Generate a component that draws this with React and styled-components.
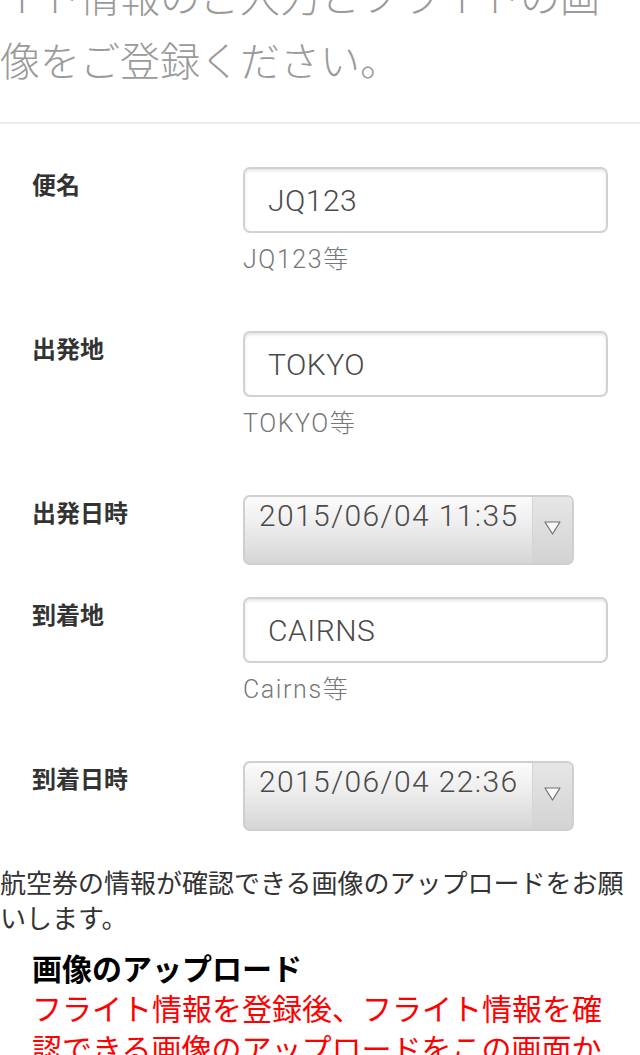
import React from "react";
import styled, { createGlobalStyle } from "styled-components";

const GlobalStyle = createGlobalStyle`
  html, body {
    margin: 0;
    padding: 0;
    background: #fff;
  }
  body {
    font-family: "Noto Sans CJK JP", "Noto Sans", sans-serif;
    overflow: hidden;
  }
`;

const Page = styled.div`
  width: 640px;
  margin-top: -101px;
  box-sizing: border-box;
`;

const Lead = styled.p`
  margin: 0;
  width: 600px;
  font-size: 40px;
  line-height: 64px;
  font-weight: 300;
  color: #9a9a9a;
`;

const Divider = styled.hr`
  margin: 31px 0 0 0;
  border: 0;
  height: 2px;
  background: #ebebeb;
`;

const Form = styled.div`
  padding: 43px 32px 0 0;
  display: flex;
  flex-direction: column;
`;

const Row = styled.div`
  display: grid;
  grid-template-columns: 243px 1fr;
  margin-bottom: ${(p) => (p.$select ? "32px" : "56px")};

  &:last-child {
    margin-bottom: 0;
  }
`;

const Label = styled.div`
  padding-left: 32px;
  font-size: 24px;
  line-height: 34px;
  font-weight: 700;
  color: #333;
`;

const Field = styled.div`
  display: flex;
  flex-direction: column;
  align-items: flex-start;
`;

const TextInput = styled.input`
  box-sizing: border-box;
  width: 100%;
  height: 66px;
  margin: 0;
  padding: 0 0 0 23px;
  border: 2px solid #d2d2d2;
  border-radius: 7px;
  box-shadow: inset 0 2px 3px rgba(0, 0, 0, 0.1);
  background: #fff;
  font-family: Roboto, "Noto Sans CJK JP", sans-serif;
  font-weight: 300;
  font-size: 30px;
  letter-spacing: 0.5px;
  color: #4a4a4a;
  outline: none;
`;

const Hint = styled.div`
  margin-top: 12px;
  font-family: Roboto, "Noto Sans CJK JP", sans-serif;
  font-weight: 300;
  font-size: 25px;
  letter-spacing: 1.6px;
  line-height: 30px;
  color: #777;
`;

const SelectBox = styled.div`
  box-sizing: border-box;
  width: 331px;
  height: 70px;
  display: flex;
  border: 2px solid #cfcfcf;
  border-radius: 7px;
  overflow: hidden;
  background: linear-gradient(#fbfbfb, #f0f0f0 35%, #d6d6d6);
`;

const SelectValue = styled.div`
  flex: 1;
  padding: 1px 0 0 14px;
  font-family: Roboto, "Noto Sans CJK JP", sans-serif;
  font-weight: 300;
  font-size: 30px;
  letter-spacing: 1.4px;
  line-height: 36px;
  color: #4a4a4a;
  white-space: nowrap;
`;

const SelectArrow = styled.div`
  width: 40px;
  display: flex;
  align-items: flex-start;
  justify-content: center;
  padding-top: 24px;
  box-sizing: border-box;
  border-left: 1px solid #d4d4d4;
  background: linear-gradient(#e6e6e6, #d3d3d3);
`;

const Notice = styled.p`
  margin: 33px 0 0 0;
  font-size: 26px;
  line-height: 35px;
  color: #333;
`;

const UploadTitle = styled.h2`
  margin: 13px 0 0 0;
  padding-left: 32px;
  font-size: 30px;
  line-height: 40px;
  font-weight: 700;
  color: #000;
`;

const Warning = styled.p`
  margin: 0 32px 0 32px;
  font-size: 30px;
  line-height: 40px;
  color: #ff0000;
`;

const fields = [
  { label: "便名", value: "JQ123", hint: "JQ123等" },
  { label: "出発地", value: "TOKYO", hint: "TOKYO等" },
  { label: "出発日時", value: "2015/06/04 11:35", select: true },
  { label: "到着地", value: "CAIRNS", hint: "Cairns等" },
  { label: "到着日時", value: "2015/06/04 22:36", select: true }
];

const Arrow = () => (
  <svg width="17" height="14" viewBox="0 0 17 14">
    <polygon
      points="1,1 16,1 8.5,13"
      fill="#fafafa"
      stroke="#707070"
      strokeWidth="1.2"
      strokeLinejoin="round"
    />
  </svg>
);

export default function App() {
  return (
    <>
      <GlobalStyle />
      <Page>
        <Lead>
          お手数ですが、下記の欄にてフライト情報のご入力とフライトの画像をご登録ください。
        </Lead>
        <Divider />
        <Form>
          {fields.map((f) => (
            <Row key={f.label} $select={f.select}>
              <Label>{f.label}</Label>
              <Field>
                {f.select ? (
                  <SelectBox>
                    <SelectValue>{f.value}</SelectValue>
                    <SelectArrow>
                      <Arrow />
                    </SelectArrow>
                  </SelectBox>
                ) : (
                  <>
                    <TextInput readOnly value={f.value} />
                    <Hint>{f.hint}</Hint>
                  </>
                )}
              </Field>
            </Row>
          ))}
        </Form>
        <Notice>
          航空券の情報が確認できる画像のアップロードをお願いします。
        </Notice>
        <UploadTitle>画像のアップロード</UploadTitle>
        <Warning>
          フライト情報を登録後、フライト情報を確認できる画像のアップロードをこの画面からお願いします。
        </Warning>
      </Page>
    </>
  );
}
